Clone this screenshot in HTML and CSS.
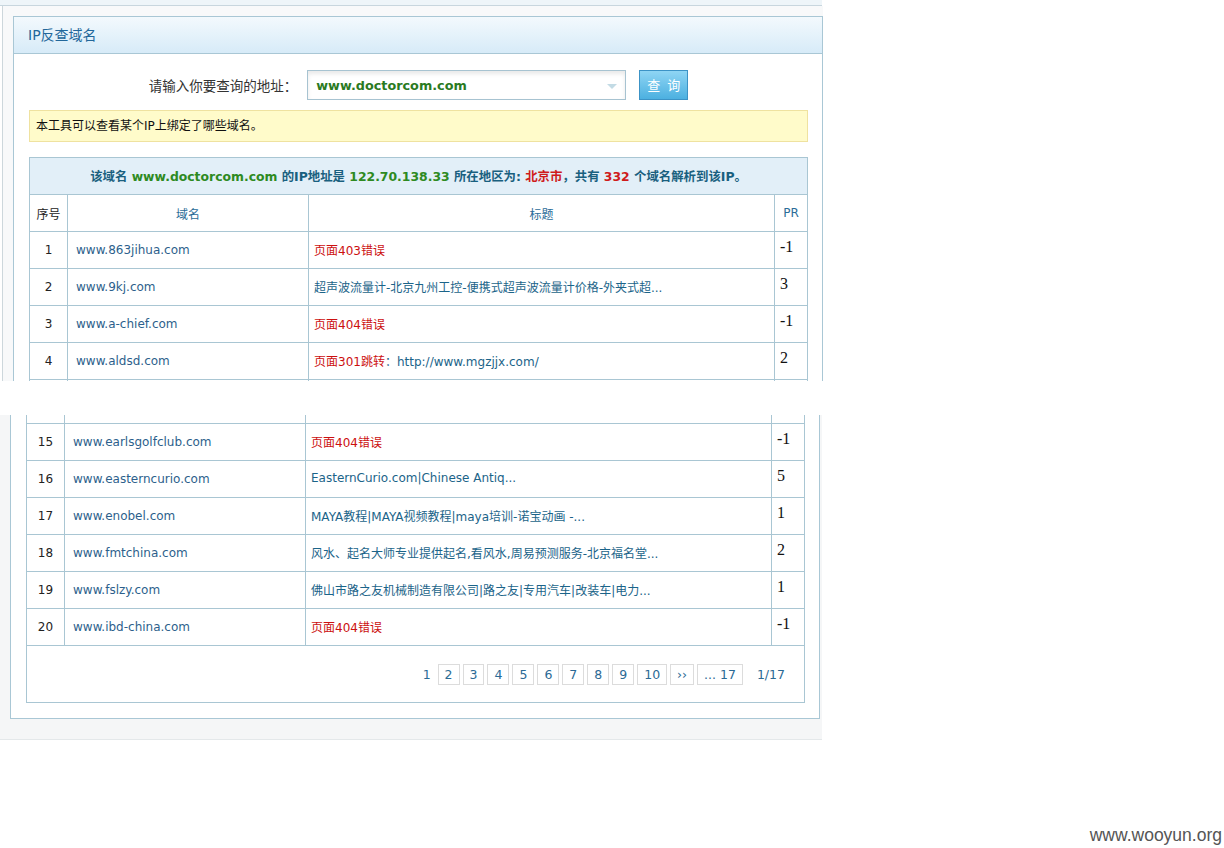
FILE: index.html
```html
<!DOCTYPE html>
<html lang="zh-CN">
<head>
<meta charset="utf-8">
<title>IP反查域名</title>
<link rel="stylesheet" href="styles.css">
</head>
<body>
<div class="page">
  <div class="slice slice-top">
    <div class="topbar"></div>
    <div class="frame">
      <div class="panel">
        <div class="panel-head">IP反查域名</div>
        <div class="panel-body">
          <form class="query">
            <label class="query-label">请输入你要查询的地址：</label>
            <div class="query-input">
              <span class="query-value">www.doctorcom.com</span>
              <span class="query-arrow"></span>
            </div>
            <button type="button" class="query-btn">查 询</button>
          </form>
          <div class="notice">本工具可以查看某个IP上绑定了哪些域名。</div>
          <table class="result">
            <colgroup>
              <col class="col-no">
              <col class="col-dom">
              <col class="col-title">
              <col class="col-pr">
            </colgroup>
            <tr class="cap">
              <td colspan="4">该域名 <span class="g">www.doctorcom.com</span> 的IP地址是 <span class="g">122.70.138.33</span> 所在地区为: <span class="r">北京市</span>，共有 <span class="r">332</span> 个域名解析到该IP。</td>
            </tr>
            <tr class="head">
              <td class="c-no dark">序号</td>
              <td class="c-dom center">域名</td>
              <td class="c-title center">标题</td>
              <td class="c-pr center">PR</td>
            </tr>
            <tr>
              <td class="c-no">1</td>
              <td class="c-dom"><span class="dom">www.863jihua.com</span></td>
              <td class="c-title"><span class="err">页面403错误</span></td>
              <td class="c-pr"><span class="pr">-1</span></td>
            </tr>
            <tr>
              <td class="c-no">2</td>
              <td class="c-dom"><span class="dom">www.9kj.com</span></td>
              <td class="c-title"><span class="ttl">超声波流量计-北京九州工控-便携式超声波流量计价格-外夹式超...</span></td>
              <td class="c-pr"><span class="pr">3</span></td>
            </tr>
            <tr>
              <td class="c-no">3</td>
              <td class="c-dom"><span class="dom">www.a-chief.com</span></td>
              <td class="c-title"><span class="err">页面404错误</span></td>
              <td class="c-pr"><span class="pr">-1</span></td>
            </tr>
            <tr>
              <td class="c-no">4</td>
              <td class="c-dom"><span class="dom">www.aldsd.com</span></td>
              <td class="c-title"><span class="err">页面301跳转</span><span class="ttl">：http://www.mgzjjx.com/</span></td>
              <td class="c-pr"><span class="pr">2</span></td>
            </tr>
            <tr>
              <td class="c-no"></td>
              <td class="c-dom"></td>
              <td class="c-title"></td>
              <td class="c-pr"></td>
            </tr>
          </table>
        </div>
      </div>
    </div>
  </div>

  <div class="slice slice-bottom">
    <div class="frame frame-shift">
      <div class="panel panel-cont">
        <div class="panel-body panel-body-cont">
          <table class="result result-cont">
            <colgroup>
              <col class="col-no">
              <col class="col-dom">
              <col class="col-title">
              <col class="col-pr">
            </colgroup>
            <tr class="stub">
              <td class="c-no"></td>
              <td class="c-dom"></td>
              <td class="c-title"></td>
              <td class="c-pr"></td>
            </tr>
            <tr>
              <td class="c-no">15</td>
              <td class="c-dom"><span class="dom">www.earlsgolfclub.com</span></td>
              <td class="c-title"><span class="err">页面404错误</span></td>
              <td class="c-pr"><span class="pr">-1</span></td>
            </tr>
            <tr>
              <td class="c-no">16</td>
              <td class="c-dom"><span class="dom">www.easterncurio.com</span></td>
              <td class="c-title"><span class="ttl">EasternCurio.com|Chinese Antiq...</span></td>
              <td class="c-pr"><span class="pr">5</span></td>
            </tr>
            <tr>
              <td class="c-no">17</td>
              <td class="c-dom"><span class="dom">www.enobel.com</span></td>
              <td class="c-title"><span class="ttl">MAYA教程|MAYA视频教程|maya培训-诺宝动画 -...</span></td>
              <td class="c-pr"><span class="pr">1</span></td>
            </tr>
            <tr>
              <td class="c-no">18</td>
              <td class="c-dom"><span class="dom">www.fmtchina.com</span></td>
              <td class="c-title"><span class="ttl">风水、起名大师专业提供起名,看风水,周易预测服务-北京福名堂...</span></td>
              <td class="c-pr"><span class="pr">2</span></td>
            </tr>
            <tr>
              <td class="c-no">19</td>
              <td class="c-dom"><span class="dom">www.fslzy.com</span></td>
              <td class="c-title"><span class="ttl">佛山市路之友机械制造有限公司|路之友|专用汽车|改装车|电力...</span></td>
              <td class="c-pr"><span class="pr">1</span></td>
            </tr>
            <tr>
              <td class="c-no">20</td>
              <td class="c-dom"><span class="dom">www.ibd-china.com</span></td>
              <td class="c-title"><span class="err">页面404错误</span></td>
              <td class="c-pr"><span class="pr">-1</span></td>
            </tr>
            <tr class="pager-row">
              <td colspan="4">
                <div class="pager">
                  <span class="pg-cur">1</span>
                  <span class="pg">2</span>
                  <span class="pg">3</span>
                  <span class="pg">4</span>
                  <span class="pg">5</span>
                  <span class="pg">6</span>
                  <span class="pg">7</span>
                  <span class="pg">8</span>
                  <span class="pg">9</span>
                  <span class="pg">10</span>
                  <span class="pg">››</span>
                  <span class="pg">... 17</span>
                  <span class="pg-total">1/17</span>
                </div>
              </td>
            </tr>
          </table>
        </div>
      </div>
    </div>
  </div>

  <div class="watermark">www.wooyun.org</div>
</div>
</body>
</html>
```

FILE: styles.css
```css
html, body {
  margin: 0;
  padding: 0;
  background: #ffffff;
}

.page {
  position: relative;
  width: 1224px;
  height: 848px;
  overflow: hidden;
  font-family: "DejaVu Sans", Verdana, "Noto Sans CJK SC", sans-serif;
  font-size: 12px;
  color: #222222;
}

.slice {
  width: 824px;
  overflow: hidden;
}

.slice-top {
  height: 381px;
}

.slice-bottom {
  margin-top: 34px;
}

.topbar {
  height: 5px;
  width: 822px;
  background: #eef5f9;
  border-bottom: 1px solid #c8d6de;
}

.frame {
  margin-left: 2px;
  width: 810px;
  border-left: 1px solid #cdd7dc;
  background: #f8f9fa;
  padding: 10px 0 0 10px;
}

.frame-shift {
  margin-left: -1px;
  width: 812px;
  padding-top: 0;
  padding-bottom: 20px;
  background: #f5f6f7;
  border-bottom: 1px solid #e4e8ea;
}

.panel {
  width: 808px;
  border: 1px solid #a9c7d5;
  background: #ffffff;
}

.panel-cont {
  border-top: 0;
}

.panel-head {
  height: 37px;
  box-sizing: border-box;
  border-bottom: 1px solid #a9c7d5;
  background: linear-gradient(#f3f9fd, #d7ebf8);
  color: #22679a;
  font-size: 14px;
  line-height: 36px;
  padding-left: 14px;
  font-family: "DejaVu Sans", "Noto Sans CJK SC", sans-serif;
}

.panel-body {
  padding: 16px 14px 0 15px;
}

.panel-body-cont {
  padding-top: 0;
  padding-bottom: 15px;
}

/* query form */
.query {
  display: flex;
  justify-content: center;
  align-items: center;
  height: 30px;
  margin: 0;
}

.query-label {
  font-size: 13.5px;
  color: #333333;
  font-family: "Noto Sans CJK SC", sans-serif;
  margin-right: 10px;
}

.query-input {
  width: 319px;
  height: 30px;
  border: 1px solid #a7c3d1;
  background: #ffffff;
  box-shadow: inset 0 3px 4px rgba(0, 0, 0, 0.09);
  display: flex;
  align-items: center;
  justify-content: space-between;
  padding: 0 8px 0 8px;
  box-sizing: border-box;
}

.query-value {
  font-weight: bold;
  font-size: 12.8px;
  color: #2b7a1f;
}

.query-arrow {
  width: 0;
  height: 0;
  border-left: 5px solid transparent;
  border-right: 5px solid transparent;
  border-top: 5px solid #c3dbe5;
  margin-top: 2px;
}

.query-btn {
  margin-left: 13px;
  width: 49px;
  height: 30px;
  border: 1px solid #3c93c6;
  background: linear-gradient(#8fd5f4, #4cb0e0);
  color: #ffffff;
  font-size: 13px;
  font-family: "Noto Sans CJK SC", sans-serif;
  letter-spacing: 2px;
  padding: 0 0 2px 2px;
  box-sizing: border-box;
  cursor: pointer;
}

/* notice */
.notice {
  margin-top: 10px;
  height: 32px;
  box-sizing: border-box;
  border: 1px solid #efe2a0;
  background: #fffbca;
  padding-left: 6px;
  line-height: 30px;
  font-size: 12px;
  color: #111111;
}

/* result table */
.result {
  margin-top: 15px;
  width: 779px;
  border-collapse: separate;
  border-spacing: 0;
  border-top: 1px solid #a9c6d3;
  border-left: 1px solid #a9c6d3;
  table-layout: fixed;
}

.col-no { width: 38px; }
.col-dom { width: 241px; }
.col-title { width: 466px; }
.col-pr { width: 33px; }

.result-cont {
  margin-top: 0;
  border-top: 0;
}

.result tr {
  height: 37px;
}

.result td {
  padding: 0;
  border-right: 1px solid #a9c6d3;
  border-bottom: 1px solid #a9c6d3;
  vertical-align: middle;
  white-space: nowrap;
  overflow: hidden;
}

.result .stub {
  height: 9px;
}

.c-no {
  text-align: center;
  color: #222222;
}

.result .c-dom {
  padding-left: 8px;
}

.result .c-title {
  padding-left: 5px;
}

.result .c-pr {
  padding-left: 5px;
  vertical-align: top;
}

.result .center {
  text-align: center;
  padding-left: 0;
  color: #2b6c98;
}

.result .head .c-pr {
  vertical-align: middle;
}

.result .dark {
  color: #222222;
}

.cap td {
  background: #e2eff8;
  text-align: center;
  font-weight: bold;
  font-size: 12.4px;
  color: #19607f;
}

.g {
  color: #2e8a22;
}

.r {
  color: #cf1b1b;
}

.dom {
  color: #2d5f8c;
}

.ttl {
  color: #1b6489;
}

.err {
  color: #cc1010;
}

.c-title span {
  position: relative;
  top: -1px;
}

.pr {
  display: block;
  padding-top: 6px;
  font-family: "Liberation Serif", "Times New Roman", serif;
  font-size: 16px;
  line-height: 18px;
  color: #111111;
}

/* pager */
.result .pager-row {
  height: 57px;
}

.pager {
  display: flex;
  justify-content: flex-end;
  align-items: center;
  padding-right: 19px;
  font-size: 12.5px;
  color: #2b6a95;
}

.pg-cur {
  margin-right: 7px;
}

.pg {
  height: 21px;
  line-height: 19px;
  box-sizing: border-box;
  border: 1px solid #dcdcdc;
  padding: 0 6px;
  margin-right: 3px;
}

.pg-total {
  margin-left: 11px;
}

/* watermark overlay */
.watermark {
  position: absolute;
  right: 2px;
  bottom: 2px;
  font-family: "Liberation Sans", Arial, sans-serif;
  font-size: 17.5px;
  color: #555555;
}
```
